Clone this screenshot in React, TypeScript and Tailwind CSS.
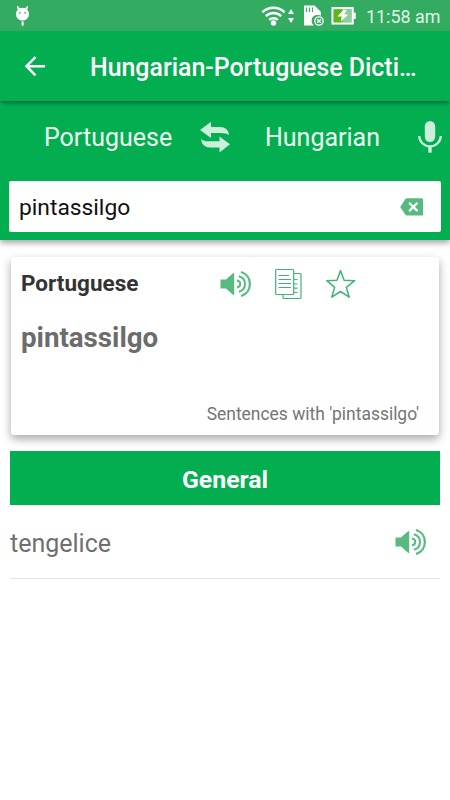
import React, { useState } from 'react';

function SpeakerIcon() {
  return (
    <svg width="31" height="26" viewBox="0 0 31 26" fill="none" stroke="#57bb80" strokeWidth="2">
      <path d="M0.5 8.6H6L13 2.2Q14.2 1.4 14.2 2.8V23.2Q14.2 24.6 13 23.8L6 17.6H0.5Z" fill="#57bb80" stroke="none" />
      <path d="M17 9.6C21.3 10.4 21.300 15.600 17 16.400" />
      <path d="M18.800 5.200C27 7.200 27 18.800 18.800 20.800" />
      <path d="M21 1C32.800 4.500 32.800 21.500 21 25" strokeWidth="2.200" />
    </svg>
  );
}

function CopyIcon() {
  return (
    <svg width="28" height="32" viewBox="0 0 28 32" fill="none" stroke="#3fb573" strokeWidth="1.2">
      <rect x="0.7" y="1.5" width="18" height="25" rx="1" />
      <path d="M19 5.5H25Q26 5.5 26 6.5V29.500Q26 30.500 25 30.500H9Q8 30.500 8 29.500V26.500" />
      <path d="M3.500 7.500H14.100M3.500 11.500H16.100M3.500 15.500H16.100M3.500 19.500H16.100M19 11.500H22.500M19 16H22.500M19 20.200H22.500M19 24.500H22.500" />
    </svg>
  );
}

function StarIcon() {
  return (
    <svg width="30" height="30" viewBox="0 0 30 30" fill="none" stroke="#3fb573" strokeWidth="1.5">
      <path d="M14.500 1.600L18.100 11.200L28.700 11.700L20.300 18.300L23.200 28.200L14.500 22.500L5.800 28.200L8.700 18.300L.8 11.700L11 11.200Z" strokeLinejoin="round" />
    </svg>
  );
}

function StatusBar() {
  return (
    <div className="flex h-[31px] items-center bg-[#33ab61]">
      <svg className="ml-4" width="14" height="22" viewBox="0 0 14 22" fill="#fff">
        <path d="M.8 1L2 1.200L3.800 3.300Q6.500 2.300 9.200 3.300L11 1.200L12.200 1L11.300 4.700Q13 6.600 13 9.200A6.500 6.400 0 0 1 0 9.200Q0 6.600 1.700 4.700Z" />
        <rect x="5.600" y="16.300" width="2" height="4.600" rx=".8" />
        <circle cx="3.900" cy="7.800" r=".9" fill="#33ab61" />
        <circle cx="9.100" cy="7.800" r=".9" fill="#33ab61" />
      </svg>
      <svg className="ml-[231px]" width="34" height="22" viewBox="0 0 34 22" fill="none" stroke="#fff" strokeWidth="2.500">
        <path d="M1.400 7.300A15.800 15.800 0 0 1 23.600 7.300M4.800 11.200A11 11 0 0 1 20.200 11.200M8.200 14.900A6.200 6.200 0 0 1 16.800 14.900" />
        <circle cx="12.500" cy="18" r="2.700" fill="#fff" stroke="none" />
        <path d="M27 9L30 4L33 9ZM27 13H33L30 18Z" fill="#fff" stroke="none" />
      </svg>
      <svg className="ml-2" width="22" height="22" viewBox="0 0 22 22">
        <path d="M1 .5H11.500L17.800 6.800V11A5.300 5.300 0 0 0 11 20.500H1Z" fill="#fff" />
        <path d="M3.500 2.500V7M6.500 2.500V7M9.500 2.500V7" stroke="#33ab61" strokeWidth="1.200" />
        <circle cx="16" cy="16" r="5.600" fill="#33ab61" />
        <circle cx="16" cy="16" r="4.200" fill="none" stroke="#fff" strokeWidth="1.300" />
        <path d="M14.200 14.200L17.800 17.800M17.800 14.200L14.200 17.800" stroke="#fff" strokeWidth="1.400" />
      </svg>
      <svg className="ml-[6px]" width="26" height="20" viewBox="0 0 26 20">
        <rect x="1.400" y="2" width="20.400" height="15.600" fill="#8bcf9f" stroke="#fff" strokeWidth="1.900" />
        <rect x="2.700" y="3.400" width="8.600" height="12.800" fill="#5cb615" />
        <rect x="22.500" y="6.600" width="2.200" height="6.300" fill="#fff" />
        <path d="M12.500 3.800L6.400 10.600L10.700 10.400L9.600 15.500L17.300 8.600L13.100 8.400L15.800 4Z" fill="#fff" />
      </svg>
      <span className="ml-[9px] mt-[3px] text-[17.900px] leading-none whitespace-nowrap text-[#e0f3e7]">11:58 am</span>
    </div>
  );
}

export default function App() {
  const [query, setQuery] = useState('pintassilgo');

  return (
    <div className="h-[800px] w-[450px] overflow-hidden bg-white font-['Roboto',sans-serif]">
      <StatusBar />

      <header className="relative z-10 flex h-[70px] items-center bg-[#02ae50] shadow-[0_3px_4px_-1px_rgba(0,0,0,0.4)]">
        <button className="ml-6">
          <svg width="22" height="22" viewBox="0 0 22 22" fill="none" stroke="#fff" strokeWidth="2.500">
            <path d="M21 11.200H3M11.500 2L2.500 11.200L11.500 20.400" />
          </svg>
        </button>
        <h1 className="ml-11 mt-[3px] whitespace-nowrap text-[24.900px] font-medium leading-8 text-white">
          Hungarian-Portuguese Dicti…
        </h1>
      </header>

      <section className="h-[139px] bg-[#02ae50] shadow-[0_3px_6px_rgba(0,0,0,0.35)]">
        <div className="flex h-[80px] items-center">
          <span className="-mt-[7px] ml-[44px] w-[155px] text-[25px] leading-none text-[#effaf3]">Portuguese</span>
          <svg className="-mt-[9px]" width="32" height="32" viewBox="0 0 32 32" fill="#cceedb">
            <path d="M1 9L12 .8V6H21Q29 6 30 14Q27.500 12 22 12H12V17Z" />
            <path d="M31 23.200L20.500 31.500V26.500H11Q3 26.500 2 18Q4.500 20.300 10 20.300H20.500V15.500Z" />
          </svg>
          <span className="-mt-[7px] ml-[34px] w-[152px] text-[25px] leading-none text-[#effaf3]">Hungarian</span>
          <svg className="-mt-[9px]" width="26" height="34" viewBox="0 0 26 34" fill="none">
            <rect x="7.800" y="1" width="10.400" height="21" rx="5.200" fill="#cceedb" />
            <path d="M2.200 16A10.800 10.300 0 0 0 23.800 16" stroke="#cceedb" strokeWidth="2.300" />
            <path d="M13 26V32.700" stroke="#cceedb" strokeWidth="3.400" />
          </svg>
        </div>
        <div className="mx-[9px] flex h-[51px] items-center rounded-[2px] bg-white">
          <input
            value={query}
            onChange={(e) => setQuery(e.target.value)}
            className="ml-[10px] mt-[2px] w-[381px] text-[22.800px] leading-8 text-[#111] outline-none"
          />
          <button onClick={() => setQuery('')}>
            <svg width="24" height="18" viewBox="0 0 24 18">
              <path d="M.2 9L5.200 1.300Q6 .3 7 .3H22Q23 .3 23 1.300V16.500Q23 17.500 22 17.500H7Q6 17.500 5.200 16.500Z" fill="#57bb80" />
              <path d="M9.200 4.800L17.500 13.100M17.500 4.800L9.200 13.100" stroke="#fff" strokeWidth="2.200" />
            </svg>
          </button>
        </div>
      </section>

      <main className="px-[10px] pt-[17px]">
        <div className="mx-px h-[178px] rounded-[3px] bg-white px-[10px] shadow-[0_4px_10px_rgba(0,0,0,0.35)]">
          <div className="flex h-[53px] items-center">
            <span className="w-[199px] text-[22.500px] font-bold leading-none text-[#333]">Portuguese</span>
            <SpeakerIcon />
            <span className="ml-6"><CopyIcon /></span>
            <span className="ml-[23px]"><StarIcon /></span>
          </div>
          <p className="mt-[10px] text-[27.700px] font-bold leading-9 text-[#6c6c6c]">pintassilgo</p>
          <p className="mt-[46px] pr-[10px] text-right text-[17.450px] leading-6 text-[#757575]">
            Sentences with 'pintassilgo'
          </p>
        </div>

        <h2 className="mt-4 flex h-[54px] items-center justify-center bg-[#02ae50] pt-1 text-[24.800px] font-bold text-white">
          General
        </h2>
        <div className="flex h-[74px] items-center justify-between border-b border-[#e6e6e6]">
          <span className="mt-[3px] text-[25px] leading-none text-[#6f6f6f]">tengelice</span>
          <span className="mr-[14px]"><SpeakerIcon /></span>
        </div>
      </main>
    </div>
  );
}
